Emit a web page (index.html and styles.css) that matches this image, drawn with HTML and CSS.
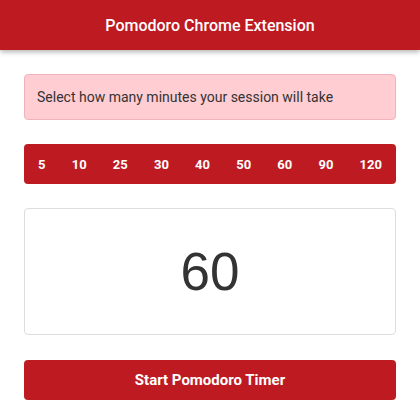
FILE: index.html
```html
<!DOCTYPE html>
<html>
<head>
<meta charset="utf-8">
<link rel="stylesheet" href="styles.css">
</head>
<body>
<header class="topbar">Pomodoro Chrome Extension</header>
<main class="content">
  <div class="alert">Select how many minutes your session will take</div>
  <div class="minutes">
    <span class="min">5</span>
    <span class="min">10</span>
    <span class="min">25</span>
    <span class="min">30</span>
    <span class="min">40</span>
    <span class="min">50</span>
    <span class="min">60</span>
    <span class="min">90</span>
    <span class="min">120</span>
  </div>
  <div class="timer">60</div>
  <button class="start">Start Pomodoro Timer</button>
</main>
</body>
</html>
```
FILE: styles.css
```css
html, body {
  margin: 0;
  padding: 0;
  background: #fff;
  font-family: Roboto, "Liberation Sans", sans-serif;
}
.topbar {
  height: 50px;
  background: #be1a22;
  color: #fff;
  font-size: 16px;
  font-weight: 500;
  display: flex;
  align-items: center;
  justify-content: center;
  box-shadow: 0 2px 5px rgba(0,0,0,0.3);
}
.content {
  padding: 24px;
  display: flex;
  flex-direction: column;
  gap: 24px;
}
.alert {
  height: 46px;
  box-sizing: border-box;
  background: #ffcdd2;
  border: 1px solid #efb3ba;
  border-radius: 4px;
  color: #333;
  font-size: 14px;
  display: flex;
  align-items: center;
  padding: 0 12px;
}
.minutes {
  height: 40px;
  background: #be1a22;
  border-radius: 4px;
  display: flex;
  align-items: center;
  justify-content: space-between;
  padding: 0 14px;
}
.min {
  color: #fff;
  font-weight: 700;
  font-size: 13px;
}
.timer {
  height: 127px;
  box-sizing: border-box;
  border: 1px solid #ddd;
  border-radius: 4px;
  display: flex;
  align-items: center;
  justify-content: center;
  font-family: "Liberation Sans", Arial, sans-serif;
  font-size: 53px;
  color: #333;
}
.start {
  margin-top: 1px;
  height: 40px;
  border: none;
  border-radius: 4px;
  background: #be1a22;
  color: #fff;
  font-family: Roboto, "Liberation Sans", sans-serif;
  font-weight: 700;
  font-size: 15px;
}
```
